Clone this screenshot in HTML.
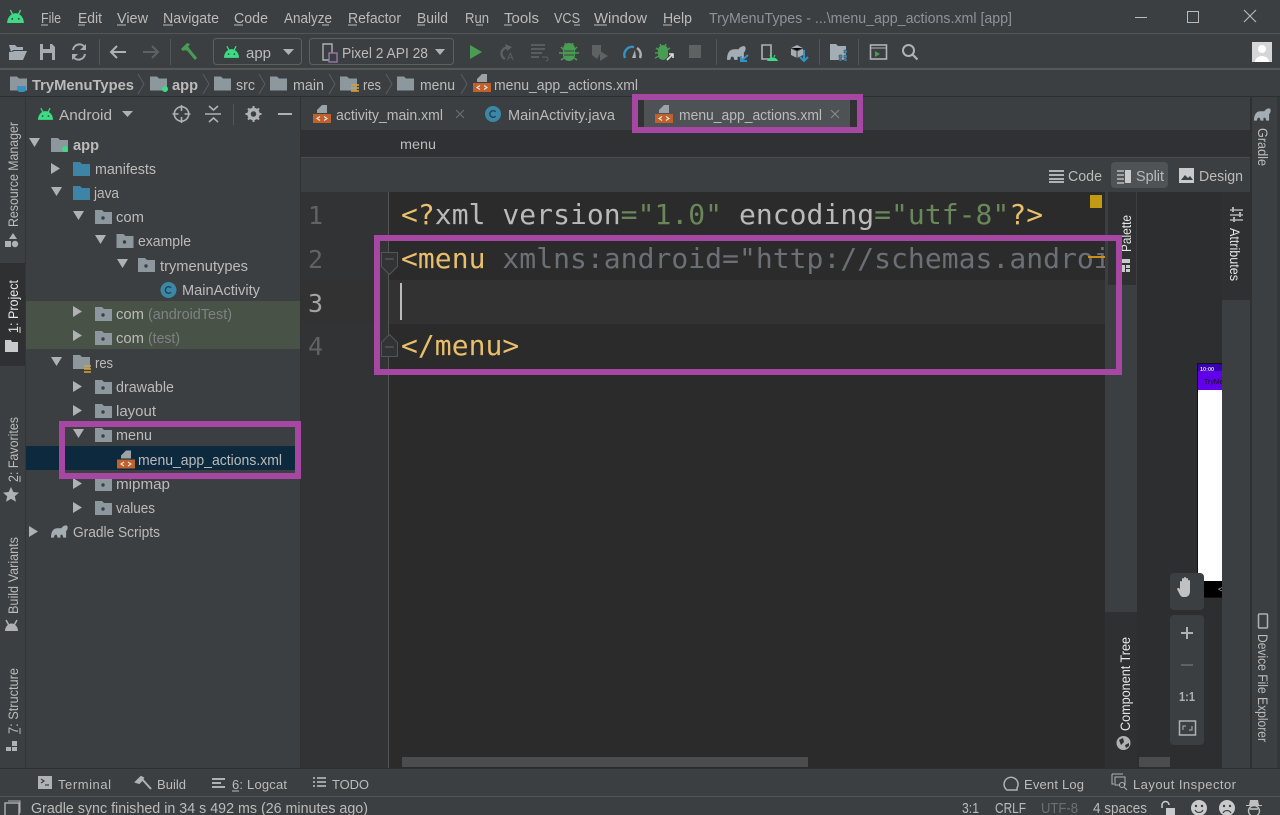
<!DOCTYPE html>
<html><head><meta charset="utf-8"><title>TryMenuTypes</title>
<style>
html,body{margin:0;padding:0;background:#3c3f41;overflow:hidden}
svg{display:block}
text{font-family:"Liberation Sans",sans-serif;font-size:15px;fill:#bbb;white-space:pre}
.m{font-family:"DejaVu Sans Mono","Liberation Mono",monospace;font-size:28px;letter-spacing:.04px}
.d{fill:#7f8285}.w{fill:#e6e6e6}.b{font-weight:bold}
.v{font-size:13.5px}
.g{fill:none;stroke:#afb1b3;stroke-width:1.6}
</style></head><body>
<svg width="1280" height="815" viewBox="0 0 1280 815" xmlns="http://www.w3.org/2000/svg">
<defs>
<symbol id="f" viewBox="0 0 17 14" overflow="visible"><path d="M0 0h7l2 2h8v12H0z" fill="#8c979e"/></symbol>
<symbol id="fb" viewBox="0 0 17 14" overflow="visible"><path d="M0 0h7l2 2h8v12H0z" fill="#3d84a6"/></symbol>
<symbol id="p" viewBox="0 0 17 14" overflow="visible"><path d="M0 0h7l2 2h8v12H0z" fill="#8c979e"/><circle cx="8" cy="8" r="1.7" fill="#3c3f41"/></symbol>
<symbol id="x" viewBox="0 0 18 18" overflow="visible"><path d="M9 0h5v8H4V5z" fill="#9aa3a8"/><rect y="9" width="18" height="9" fill="#c0602a"/><path d="M7 11.5l-3 2 3 2M11 11.5l3 2-3 2" fill="none" stroke="#e8e8e8" stroke-width="1.1"/></symbol>
<symbol id="a" viewBox="0 0 18 14" overflow="visible"><path d="M0 14a9 10.500 0 0 1 18 0z" fill="#3ddc84"/><path d="M3.500 0l2.500 5M14.500 0l-2.500 5" stroke="#3ddc84" stroke-width="1.500"/><circle cx="5.500" cy="9.500" r="1" fill="#3c3f41"/><circle cx="12.500" cy="9.500" r="1" fill="#3c3f41"/></symbol>
<symbol id="c" viewBox="0 0 16 16" overflow="visible"><circle cx="8" cy="8" r="8" fill="#3a87a8"/><path d="M10.6 5.8A3.3 3.3 0 1 0 10.6 10.2" fill="none" stroke="#23434f" stroke-width="1.4"/></symbol>
<symbol id="e" viewBox="0 0 18 13" overflow="visible"><path d="M0 13C0 7 2 3 7 3h4c1-2 3-3 5-3s2 3 1 5l-1 1v7h-3l-1-3h-2v3H7l-1-3H4l-1 3z" fill="#a4adb3"/></symbol>
<clipPath id="cl"><rect x="390" y="192" width="715" height="100"/></clipPath>
<clipPath id="ph"><rect x="1137" y="192" width="85" height="570"/></clipPath>
</defs>

<rect width="1280" height="815" fill="#3c3f41"/>
<!-- top separators -->
<rect y="33" width="1280" height="1" fill="#535556"/>
<rect y="68" width="1280" height="2" fill="#555758"/>
<rect y="96" width="1280" height="1" fill="#2c2e2f"/>

<!-- menu -->
<use href="#a" x="6" y="10" width="19" height="13"/>
<text x="41" y="23" textLength="20" lengthAdjust="spacingAndGlyphs">File</text>
<text x="78" y="23" textLength="24" lengthAdjust="spacingAndGlyphs">Edit</text>
<text x="117" y="23" textLength="31" lengthAdjust="spacingAndGlyphs">View</text>
<text x="163" y="23" textLength="56" lengthAdjust="spacingAndGlyphs">Navigate</text>
<text x="234" y="23" textLength="34" lengthAdjust="spacingAndGlyphs">Code</text>
<text x="284" y="23" textLength="48" lengthAdjust="spacingAndGlyphs">Analyze</text>
<text x="348" y="23" textLength="53" lengthAdjust="spacingAndGlyphs">Refactor</text>
<text x="417" y="23" textLength="31" lengthAdjust="spacingAndGlyphs">Build</text>
<text x="465" y="23" textLength="24" lengthAdjust="spacingAndGlyphs">Run</text>
<text x="504" y="23" textLength="35" lengthAdjust="spacingAndGlyphs">Tools</text>
<text x="554" y="23" textLength="26" lengthAdjust="spacingAndGlyphs">VCS</text>
<text x="594" y="23" textLength="53" lengthAdjust="spacingAndGlyphs">Window</text>
<text x="663" y="23" textLength="29" lengthAdjust="spacingAndGlyphs">Help</text>
<path d="M41 25h7M78 25h7M117 25h9M163 25h10M234 25h9M322 25h7M348 25h9M417 25h8M476 25h7M504 25h8M574 25h6M594 25h13M663 25h9" stroke="#bbb" stroke-width="1"/>
<text x="709" y="23" textLength="303" lengthAdjust="spacingAndGlyphs" style="fill:#8f9397">TryMenuTypes - ...\menu_app_actions.xml [app]</text>
<path d="M1135 17.500h12" stroke="#bbb"/><rect x="1187.500" y="11.500" width="11" height="11" fill="none" stroke="#bbb"/><path d="M1244 10l12 12M1256 10l-12 12" stroke="#bbb" stroke-width="1.100"/>

<!-- toolbar -->
<path d="M9 45h6l2 2h6v3H13l-2 2zM9 60V52h5l-2-1h15l-4 9z" fill="#a4adb3"/>
<path d="M40 44h12l3 3v13H40z" fill="#a5adb2"/><rect x="43" y="44" width="7" height="5" fill="#3c3f41"/><rect x="43" y="53" width="9" height="7" fill="#3c3f41"/>
<path d="M85 47.500A6.500 6.500 0 0 0 73 50M73 56.500A6.500 6.500 0 0 0 85 54" fill="none" stroke="#a4adb3" stroke-width="2"/><path d="M86 44v6h-6zM72 60v-6h6z" fill="#a4adb3"/>
<rect x="99" y="39" width="1" height="26" fill="#555"/>
<path d="M126 52h-15M117 46l-6 6 6 6" fill="none" stroke="#afb1b3" stroke-width="2"/>
<path d="M143 52h15M152 46l6 6-6 6" fill="none" stroke="#5f6263" stroke-width="2"/>
<rect x="170" y="39" width="1" height="26" fill="#555"/>
<path d="M181 49l6-6 3 1-2 3 1 1-3 3-1-1-2 1z" fill="#499c54"/><path d="M187 48l9 11" stroke="#499c54" stroke-width="3"/>
<rect x="213.500" y="38.500" width="88" height="26" rx="3" fill="none" stroke="#5e6060"/>
<use href="#a" x="224" y="46" width="15" height="12"/>
<text x="246" y="58" textLength="25" lengthAdjust="spacingAndGlyphs">app</text>
<path d="M283 49h11l-5.500 6z" fill="#afb1b3"/>
<rect x="309.500" y="38.500" width="144" height="26" rx="3" fill="none" stroke="#5e6060"/>
<path d="M323 44h9v16h-9z" fill="none" stroke="#afb1b3" stroke-width="1.400"/><rect x="329" y="53" width="8" height="9" fill="#3c3f41" stroke="#9876aa" stroke-width="1.400"/>
<text x="342" y="58" textLength="86" lengthAdjust="spacingAndGlyphs">Pixel 2 API 28</text>
<path d="M435 49h10l-5 6z" fill="#afb1b3"/>
<path d="M470 45l12 7-12 7z" fill="#499c54"/>
<path d="M510 48A6 6 0 1 0 505 59" fill="none" stroke="#5f6263" stroke-width="2.200"/><path d="M505 44l7 3-5 4z" fill="#5f6263"/><text x="507" y="60" style="font-size:10px;fill:#5f6263">A</text>
<path d="M531 45h14M531 49h14M531 53h11M531 57h8" stroke="#5f6263" stroke-width="1.700"/><path d="M542 57h4a2 2 0 0 1 0 4" fill="none" stroke="#5f6263"/>
<path d="M563 49a6 6 0 0 1 12 0v6a6 6 0 0 1-12 0z" fill="#499c54"/><path d="M561 47l3 3M577 47l-3 3M559 53h4M575 53h4M561 60l3-2M577 60l-3-2M565 43l1 3M573 43l-1 3" stroke="#499c54" stroke-width="1.400"/><path d="M564 51h10M564 55h10" stroke="#3c3f41" stroke-width="1"/>
<path d="M592 45h9v7l-4 7-5-4z" fill="#5f6263"/><path d="M600 51l8 5-8 5z" fill="#5f6263"/>
<path d="M625 58a8 8 0 0 1 9-11" fill="none" stroke="#3592c4" stroke-width="2.400"/><path d="M637 48a8 8 0 0 1 3 10" fill="none" stroke="#afb1b3" stroke-width="2.400"/><path d="M632 58l3-8 1 8z" fill="#afb1b3"/>
<path d="M658 50a5 5 0 0 1 10 0v5a5 5 0 0 1-10 0z" fill="#499c54"/><path d="M656 48l3 2M670 48l-3 2M655 53h4M655 58l4-2M660 44l1 2M666 44l-1 2" stroke="#499c54" stroke-width="1.400"/><path d="M667 60l6-6M669 54h4v4" fill="none" stroke="#ddd" stroke-width="1.600"/>
<rect x="689" y="45" width="12" height="13" fill="#5f6263"/>
<rect x="716" y="39" width="1" height="26" fill="#555"/>
<use href="#e" x="727" y="46" width="19" height="14"/><path d="M748 55l-7 6M741 56v5h6" fill="none" stroke="#3592c4" stroke-width="2"/>
<path d="M762 45h9v14h-9z" fill="none" stroke="#afb1b3" stroke-width="1.600"/><path d="M767 61a6 6 0 0 1 11 0z" fill="#3ddc84"/><path d="M770 55l1 2M775 55l-1 2" stroke="#3ddc84"/>
<path d="M791 48l6-3 6 3v7l-6 3-6-3z" fill="#a4adb3"/><path d="M791 48l6 3 6-3M797 51v7" stroke="#3c3f41"/><path d="M804 50v11M800 57l4 4 4-4" fill="none" stroke="#3592c4" stroke-width="2"/>
<rect x="819" y="39" width="1" height="26" fill="#555"/>
<path d="M830 44h6l2 2h8v14h-16z" fill="#a4adb3"/><path d="M839 55h3v3h-3zM844 55h3v3h-3zM844 50h3v3h-3zM839 59h3v2h-3zM844 59h3v2h-3z" fill="#3592c4" stroke="#3c3f41" stroke-width=".5"/>
<rect x="858" y="39" width="1" height="26" fill="#555"/>
<rect x="870.500" y="45" width="16" height="14" fill="none" stroke="#afb1b3" stroke-width="1.600"/><path d="M871 48h15" stroke="#afb1b3"/><path d="M875 51l5 3-5 3z" fill="#499c54"/>
<circle cx="908.500" cy="50.500" r="5.500" fill="none" stroke="#afb1b3" stroke-width="2"/><path d="M912.500 54.500l5 5" stroke="#afb1b3" stroke-width="2.200"/>
<rect x="1252" y="42" width="20" height="20" fill="#d6d6d6"/><circle cx="1262" cy="49" r="4" fill="#fff"/><path d="M1255 62a7 6 0 0 1 14 0z" fill="#fff"/>

<!-- breadcrumb -->
<use href="#f" x="10" y="76" width="17" height="15"/><path d="M17 86h9v3a3 3 0 0 1-3 3h-3a3 3 0 0 1-3-3z" fill="#3592c4"/>
<text x="32" y="90" textLength="102" lengthAdjust="spacingAndGlyphs" class="b">TryMenuTypes</text>
<use href="#f" x="150" y="76" width="17" height="15"/><circle cx="165" cy="89" r="3" fill="#3ddc84"/>
<text x="172" y="90" textLength="26" lengthAdjust="spacingAndGlyphs" class="b">app</text>
<use href="#f" x="214" y="76" width="17" height="15"/><text x="236" y="90" textLength="19" lengthAdjust="spacingAndGlyphs">src</text>
<use href="#f" x="270" y="76" width="17" height="15"/><text x="293" y="90" textLength="31" lengthAdjust="spacingAndGlyphs">main</text>
<use href="#f" x="340" y="76" width="17" height="15"/><path d="M351 85h8M351 88h8M351 91h8" stroke="#d8a43a" stroke-width="1.500"/><text x="363" y="90" textLength="18" lengthAdjust="spacingAndGlyphs">res</text>
<use href="#f" x="397" y="76" width="17" height="15"/><text x="420" y="90" textLength="35" lengthAdjust="spacingAndGlyphs">menu</text>
<use href="#x" x="473" y="74" width="18" height="18"/><text x="494" y="90" textLength="144" lengthAdjust="spacingAndGlyphs">menu_app_actions.xml</text>
<path d="M138 74l6 10-6 10M203 74l6 10-6 10M259 74l6 10-6 10M329 74l6 10-6 10M386 74l6 10-6 10M461 74l6 10-6 10" fill="none" stroke="#5a5d5f"/>

<!-- left strip -->
<rect x="25" y="97" width="1" height="671" fill="#323436"/>
<rect y="263" width="25" height="103" fill="#2e3031"/>
<text transform="translate(18 227) rotate(-90)" textLength="105" lengthAdjust="spacingAndGlyphs" class="v">Resource Manager</text>
<path d="M13 233l4 6H9z" fill="#afb1b3"/><rect x="5" y="241" width="6" height="6" fill="#afb1b3"/><circle cx="15" cy="244" r="3.200" fill="#afb1b3"/>
<text transform="translate(18 333) rotate(-90)" textLength="53" lengthAdjust="spacingAndGlyphs" class="v w">1: Project</text>
<path d="M20 327v6" stroke="#ddd"/>
<path d="M5 340h6l1 2h6v10H5z" fill="#c8cacb"/>
<text transform="translate(18 482) rotate(-90)" textLength="65" lengthAdjust="spacingAndGlyphs" class="v">2: Favorites</text>
<path d="M20 476v6M20 728v6" stroke="#bbb"/>
<path d="M11 487l2.400 5 5.600.6-4.200 3.700 1.200 5.500-5-2.900-5 2.900 1.200-5.500-4.200-3.700 5.600-.6z" fill="#afb1b3"/>
<text transform="translate(18 614) rotate(-90)" textLength="77" lengthAdjust="spacingAndGlyphs" class="v">Build Variants</text>
<path d="M5 631a6.500 7.500 0 0 1 13 0z" fill="#afb1b3"/><path d="M6 620l2.500 4.500M17 620l-2.500 4.500" stroke="#afb1b3" stroke-width="1.500"/>
<text transform="translate(18 734) rotate(-90)" textLength="66" lengthAdjust="spacingAndGlyphs" class="v">7: Structure</text>
<path d="M6 747h5v4H6zM12 747h5v4h-5zM12 741h5v5h-5z" fill="#afb1b3"/>

<!-- project header -->
<use href="#a" x="38" y="108" width="15" height="12"/>
<text x="59" y="120" textLength="53" lengthAdjust="spacingAndGlyphs">Android</text>
<path d="M122 111h11l-5.500 6z" fill="#afb1b3"/>
<circle cx="181.500" cy="114" r="7.200" class="g"/><path d="M181.500 105v6M181.500 117v6M172.500 114h6M184.500 114h6" class="g"/>
<path d="M205 114h16M209 106l4.500 4 4.500-4M209 122l4.500-4 4.500 4" class="g"/>
<rect x="233" y="104" width="1" height="21" fill="#555"/>
<circle cx="253.500" cy="114" r="4.500" fill="none" stroke="#afb1b3" stroke-width="3.500"/><path d="M253.500 106v3M253.500 119v3M245.500 114h3M258.500 114h3M248 108.500l2 2M257 117.500l2 2M259 108.500l-2 2M250 117.500l-2 2" stroke="#afb1b3" stroke-width="2"/>
<path d="M278 114h14" stroke="#afb1b3" stroke-width="2"/>

<!-- tree -->
<rect x="26" y="301" width="274" height="48" fill="#485246"/>
<rect x="26" y="446" width="270" height="24" fill="#0d293e"/>
<g fill="#afb1b3">
<path d="M29 138h11l-5.500 9z"/><path d="M51 163l9 5.500-9 5.500z"/><path d="M51 187h11l-5.500 9z"/><path d="M73 211h11l-5.500 9z"/><path d="M95 235h11l-5.500 9z"/><path d="M117 259h11l-5.500 9z"/>
<path d="M73 306l9 5.500-9 5.500z"/><path d="M73 330l9 5.500-9 5.500z"/><path d="M51 357h11l-5.500 9z"/><path d="M73 381l9 5.500-9 5.500z"/><path d="M73 405l9 5.500-9 5.500z"/><path d="M73 429h11l-5.500 9z"/><path d="M73 478l9 5.500-9 5.500z"/><path d="M73 502l9 5.500-9 5.500z"/><path d="M29 526l9 5.500-9 5.500z"/>
</g>
<use href="#f" x="51" y="138" width="17" height="14"/><circle cx="65" cy="149" r="3" fill="#3ddc84"/>
<text x="73" y="150" textLength="26" lengthAdjust="spacingAndGlyphs" class="b">app</text>
<use href="#fb" x="73" y="162" width="17" height="14"/><text x="95" y="174" textLength="61" lengthAdjust="spacingAndGlyphs">manifests</text>
<use href="#fb" x="73" y="186" width="17" height="14"/><text x="94" y="198" textLength="25" lengthAdjust="spacingAndGlyphs">java</text>
<use href="#p" x="95" y="210" width="17" height="14"/><text x="116" y="222" textLength="28" lengthAdjust="spacingAndGlyphs">com</text>
<use href="#p" x="116.500" y="234" width="17" height="14"/><text x="138" y="246" textLength="53" lengthAdjust="spacingAndGlyphs">example</text>
<use href="#p" x="138" y="258" width="17" height="14"/><text x="160" y="271" textLength="88" lengthAdjust="spacingAndGlyphs">trymenutypes</text>
<use href="#c" x="160.500" y="282" width="16" height="16"/><text x="182" y="295" textLength="78" lengthAdjust="spacingAndGlyphs">MainActivity</text>
<use href="#p" x="95" y="307" width="17" height="14"/><text x="116" y="319" textLength="28" lengthAdjust="spacingAndGlyphs">com</text><text x="148" y="319" textLength="84" lengthAdjust="spacingAndGlyphs" class="d">(androidTest)</text>
<use href="#p" x="95" y="331" width="17" height="14"/><text x="116" y="343" textLength="28" lengthAdjust="spacingAndGlyphs">com</text><text x="148" y="343" textLength="32" lengthAdjust="spacingAndGlyphs" class="d">(test)</text>
<use href="#f" x="73" y="355" width="17" height="14"/><path d="M84 366h7M84 369h7M84 372h7" stroke="#d8a43a" stroke-width="1.400"/><text x="95" y="368" textLength="18" lengthAdjust="spacingAndGlyphs">res</text>
<use href="#p" x="95" y="380" width="17" height="14"/><text x="116" y="392" textLength="58" lengthAdjust="spacingAndGlyphs">drawable</text>
<use href="#p" x="95" y="404" width="17" height="14"/><text x="116" y="416" textLength="40" lengthAdjust="spacingAndGlyphs">layout</text>
<use href="#p" x="95" y="428" width="17" height="14"/><text x="116" y="440" textLength="36" lengthAdjust="spacingAndGlyphs">menu</text>
<use href="#x" x="117" y="450" width="18" height="19"/><text x="138" y="465" textLength="144" lengthAdjust="spacingAndGlyphs">menu_app_actions.xml</text>
<use href="#p" x="95" y="477" width="17" height="14"/><text x="116" y="489" textLength="54" lengthAdjust="spacingAndGlyphs">mipmap</text>
<use href="#p" x="95" y="501" width="17" height="14"/><text x="116" y="513" textLength="39" lengthAdjust="spacingAndGlyphs">values</text>
<use href="#e" x="51" y="525" width="17" height="13"/>
<text x="73" y="537" textLength="87" lengthAdjust="spacingAndGlyphs">Gradle Scripts</text>

<!-- tabs -->
<rect x="300" y="97" width="1" height="671" fill="#2f3132"/>
<use href="#x" x="313" y="105" width="18" height="18"/>
<text x="336" y="120" textLength="107" lengthAdjust="spacingAndGlyphs">activity_main.xml</text>
<path d="M456 110l8 8M464 110l-8 8" stroke="#6a6d6f" stroke-width="1.200"/>
<use href="#c" x="485" y="106" width="16" height="16"/>
<text x="508" y="120" textLength="107" lengthAdjust="spacingAndGlyphs">MainActivity.java</text>
<rect x="636" y="99" width="223" height="30" fill="#303233"/>
<rect x="644" y="99" width="206" height="28" fill="#4e5254"/>
<rect x="644" y="127" width="206" height="2" fill="#4a88c7"/>
<use href="#x" x="655" y="105" width="18" height="18"/>
<text x="679" y="120" textLength="143" lengthAdjust="spacingAndGlyphs">menu_app_actions.xml</text>
<path d="M831 110l8 8M839 110l-8 8" stroke="#85888a" stroke-width="1.200"/>

<!-- editor chrome -->
<rect x="301" y="130" width="949" height="27" fill="#303132"/>
<text x="400" y="149" textLength="36" lengthAdjust="spacingAndGlyphs" style="font-size:14px">menu</text>
<rect x="301" y="157" width="949" height="1" fill="#4a4c4d"/>
<rect x="301" y="158" width="949" height="34" fill="#3c3f41"/>
<path d="M1049 171h15M1049 175h15M1049 179h15M1049 182h15" stroke="#c0c2c3" stroke-width="1.700"/>
<text x="1068" y="181" textLength="34" lengthAdjust="spacingAndGlyphs">Code</text>
<rect x="1111" y="162" width="57" height="26" rx="4" fill="#4f5356"/>
<path d="M1117 171h7M1117 175h7M1117 179h7M1117 183h7" stroke="#bbb" stroke-width="1.600"/><rect x="1125" y="170" width="6" height="13" fill="#c8cacb"/>
<text x="1136" y="181" textLength="28" lengthAdjust="spacingAndGlyphs">Split</text>
<rect x="1179" y="168" width="15" height="15" fill="#c8cacb"/><path d="M1181 180l4-5 3 3 2-2 3 4z" fill="#3c3f41"/>
<text x="1199" y="181" textLength="44" lengthAdjust="spacingAndGlyphs">Design</text>

<!-- editor -->
<rect x="301" y="192" width="805" height="576" fill="#2b2b2b"/>
<rect x="301" y="192" width="88" height="576" fill="#313335"/>
<rect x="301" y="280" width="804" height="44" fill="#323232"/>
<rect x="388" y="192" width="1" height="576" fill="#555"/>
<text class="m" x="308" y="224" style="font-size:25px;fill:#606366">1</text>
<text class="m" x="308" y="268" style="font-size:25px;fill:#606366">2</text>
<text class="m" x="308" y="312" style="font-size:25px;fill:#a4a3a3">3</text>
<text class="m" x="308" y="355" style="font-size:25px;fill:#606366">4</text>
<text class="m" x="401" y="224" style="fill:#bababa"><tspan style="fill:#e8bf6a">&lt;?</tspan>xml version<tspan style="fill:#6a8759">="1.0"</tspan> encoding<tspan style="fill:#6a8759">="utf-8"</tspan><tspan style="fill:#e8bf6a">?&gt;</tspan></text>
<g clip-path="url(#cl)"><text class="m" x="401" y="268" style="fill:#6c6f75"><tspan style="fill:#e8bf6a">&lt;menu</tspan> xmlns:android="http://schemas.android.com</text></g>
<rect x="400" y="283" width="2" height="37" fill="#bbb"/>
<text class="m" x="401" y="355" style="fill:#e8bf6a">&lt;/menu&gt;</text>
<path d="M381.500 252.500h16v14l-8 8-8-8z" fill="#313335" stroke="#555"/><path d="M385 259h9" stroke="#666"/>
<path d="M381.500 356.500h16v-14l-8-8-8 8z" fill="#313335" stroke="#555"/><path d="M385 347h9" stroke="#666"/>
<rect x="1090" y="195" width="12" height="13" fill="#c39a14"/>
<rect x="1088" y="256" width="17" height="2" fill="#c9911a"/>
<rect x="402" y="757" width="406" height="10" fill="#4a4c4d"/>

<!-- right side strips -->
<rect x="1105" y="192" width="32" height="420" fill="#3c3f41"/>
<rect x="1108" y="192" width="28" height="93" fill="#2e3031"/>
<rect x="1105" y="612" width="32" height="156" fill="#2e3031"/>
<rect x="1137" y="192" width="85" height="576" fill="#2c2e2f"/>
<rect x="1222" y="192" width="28" height="108" fill="#2e3031"/>
<rect x="1222" y="300" width="28" height="468" fill="#3c3f41"/>
<rect x="1250" y="97" width="2" height="671" fill="#2e3031"/>
<rect x="1277" y="97" width="3" height="671" fill="#343638"/>
<text transform="translate(1131 252) rotate(-90)" textLength="37" lengthAdjust="spacingAndGlyphs" class="v w">Palette</text>
<path d="M1122 259h8v4h-8zM1122 265h3v7h-3zM1126 265h4v3h-4zM1126 269h4v3h-4z" fill="#c8cacb"/>
<text transform="translate(1230 228) rotate(90)" textLength="53" lengthAdjust="spacingAndGlyphs" class="v w">Attributes</text>
<path d="M1230 210h13M1230 215h13M1230 220h13" stroke="#afb1b3" stroke-width="1.500"/><path d="M1233 207v5M1240 212v5M1234 217v5" stroke="#afb1b3" stroke-width="2"/>
<text transform="translate(1130 731) rotate(-90)" textLength="94" lengthAdjust="spacingAndGlyphs" class="v w">Component Tree</text>
<circle cx="1123.500" cy="743" r="7" fill="#afb1b3"/><path d="M1119 740l4-2 1 4-3 3zM1125 745l4-2 0 3-3 2z" fill="#2e3031"/>
<text transform="translate(1258 128) rotate(90)" textLength="38" lengthAdjust="spacingAndGlyphs" class="v">Gradle</text>
<use href="#e" x="1254" y="108" width="17" height="13"/>
<text transform="translate(1258 634) rotate(90)" textLength="108" lengthAdjust="spacingAndGlyphs" class="v">Device File Explorer</text>
<rect x="1258.500" y="614" width="9" height="14" rx="1" fill="none" stroke="#afb1b3" stroke-width="1.500"/>

<!-- preview -->
<g clip-path="url(#ph)">
<rect x="1197" y="363" width="30" height="235" fill="#111"/>
<rect x="1198" y="364" width="30" height="7" fill="#3700b3"/>
<rect x="1198" y="371" width="30" height="19" fill="#6200ee"/>
<rect x="1198" y="390" width="30" height="191" fill="#fff"/>
<rect x="1198" y="581" width="30" height="16" fill="#000"/>
<text x="1200" y="371" class="b" style="font-size:5.500px;fill:#ddd">10:00</text>
<text x="1204" y="384" style="font-size:7px;fill:#111">TryMenu</text>
<text x="1218" y="592" style="font-size:8px;fill:#ccc">&lt;</text>
</g>
<rect x="1170" y="573" width="34" height="37" rx="4" fill="#3c3f41"/>
<path d="M1180 589v-7a1 1 0 0 1 2 0v4-7a1 1 0 0 1 2 0v7-8a1 1 0 0 1 2 0v8-7a1 1 0 0 1 2 0v7-5a1 1 0 0 1 2 0v10c0 4-2 6-5 6h-2c-2 0-3-2-5-6l-1-2c1-2 2-1 3 0z" fill="#bfc1c2"/>
<rect x="1170" y="615" width="34" height="130" rx="4" fill="#3c3f41"/>
<path d="M1181 633h12M1187 627v12" stroke="#afb1b3" stroke-width="2"/>
<path d="M1181 665h12" stroke="#5f6263" stroke-width="2"/>
<text x="1179" y="701" textLength="16" lengthAdjust="spacingAndGlyphs" class="b" style="font-size:13px;fill:#afb1b3">1:1</text>
<rect x="1179.500" y="721" width="16" height="14" fill="none" stroke="#afb1b3" stroke-width="1.500"/><path d="M1183 730v-4h3M1192 726v4h-3" fill="none" stroke="#afb1b3"/>
<rect x="1139" y="757" width="31" height="10" fill="#4a4c4d"/>

<!-- purple boxes -->
<g fill="none" stroke="#a647a3" stroke-width="6">
<rect x="635" y="97" width="225" height="33"/>
<rect x="62" y="424" width="236" height="52"/>
<rect x="377" y="238" width="742" height="134"/>
</g>

<!-- bottom bars -->
<rect y="768" width="1280" height="1" fill="#2e3031"/>
<rect y="769" width="1280" height="46" fill="#3c3f41"/>
<rect y="796" width="1280" height="1" fill="#515354"/>
<rect x="38" y="776" width="14" height="13" fill="#afb1b3"/><path d="M41 779l3 2-3 2M45 785h4" fill="none" stroke="#3c3f41" stroke-width="1.200"/>
<text x="58" y="789" textLength="53" style="font-size:13px">Terminal</text>
<path d="M136 782l5-5 2 1-1 2-3 3zM142 779l9 10" stroke="#afb1b3" stroke-width="2" fill="#afb1b3"/>
<text x="157" y="789" textLength="29" style="font-size:13px">Build</text>
<path d="M212 779h13M212 783h9M212 787h13" stroke="#afb1b3" stroke-width="2"/>
<text x="232" y="789" textLength="55" style="font-size:13px">6: Logcat</text><path d="M232 791h7" stroke="#bbb"/>
<path d="M313 778h2M317 778h9M313 782h2M317 782h9M313 786h2M317 786h9" stroke="#afb1b3" stroke-width="1.800"/>
<text x="332" y="789" textLength="37" style="font-size:13px">TODO</text>
<path d="M1007 790a7 7 0 1 1 10-2v2z" fill="none" stroke="#afb1b3" stroke-width="1.500"/>
<text x="1024" y="789" textLength="60" style="font-size:13px">Event Log</text>
<path d="M1112 774h11M1112 774v10h2" fill="none" stroke="#afb1b3"/><rect x="1115" y="777" width="10" height="8" fill="none" stroke="#afb1b3"/><circle cx="1122" cy="785" r="2.500" fill="#3c3f41" stroke="#afb1b3"/><path d="M1124 787l3 3" stroke="#afb1b3"/>
<text x="1133" y="789" textLength="103" style="font-size:13px">Layout Inspector</text>
<rect x="5" y="803" width="14" height="13" fill="none" stroke="#afb1b3" stroke-width="1.400"/><path d="M8 801h12v12" fill="none" stroke="#afb1b3"/>
<text x="31" y="813" textLength="337" lengthAdjust="spacingAndGlyphs" style="font-size:14.500px">Gradle sync finished in 34 s 492 ms (26 minutes ago)</text>
<text x="962" y="813" textLength="17" lengthAdjust="spacingAndGlyphs" style="font-size:14.500px">3:1</text>
<text x="995" y="813" textLength="31" lengthAdjust="spacingAndGlyphs" style="font-size:14.500px">CRLF</text>
<text x="1041" y="813" textLength="37" lengthAdjust="spacingAndGlyphs" style="font-size:14.500px;fill:#6c6f72">UTF-8</text>
<text x="1093" y="813" textLength="54" lengthAdjust="spacingAndGlyphs" style="font-size:14.500px">4 spaces</text>
<path d="M1162 808v-3a3.500 3.500 0 0 1 7 0" fill="none" stroke="#c8cacb" stroke-width="1.500"/><rect x="1166" y="808" width="9" height="7" fill="#c8cacb"/>
<circle cx="1199" cy="808" r="8" fill="#c8cacb"/><circle cx="1196" cy="806" r="1.200" fill="#3c3f41"/><circle cx="1202" cy="806" r="1.200" fill="#3c3f41"/><path d="M1195 810a4.500 4.500 0 0 0 8 0" fill="none" stroke="#3c3f41" stroke-width="1.200"/>
<circle cx="1227" cy="808" r="8" fill="#c8cacb"/><circle cx="1224" cy="806" r="1.200" fill="#3c3f41"/><circle cx="1230" cy="806" r="1.200" fill="#3c3f41"/><path d="M1223 813a4.500 4.500 0 0 1 8 0" fill="none" stroke="#3c3f41" stroke-width="1.200"/>
<path d="M1249 805l1-5h8l1 5h3v1h-16v-1z" fill="#bdbfc0"/><circle cx="1254" cy="811" r="5.500" fill="none" stroke="#bdbfc0" stroke-width="1.400"/><path d="M1250 809h8" stroke="#bdbfc0" stroke-width="1.600"/>
</svg>
</body></html>
